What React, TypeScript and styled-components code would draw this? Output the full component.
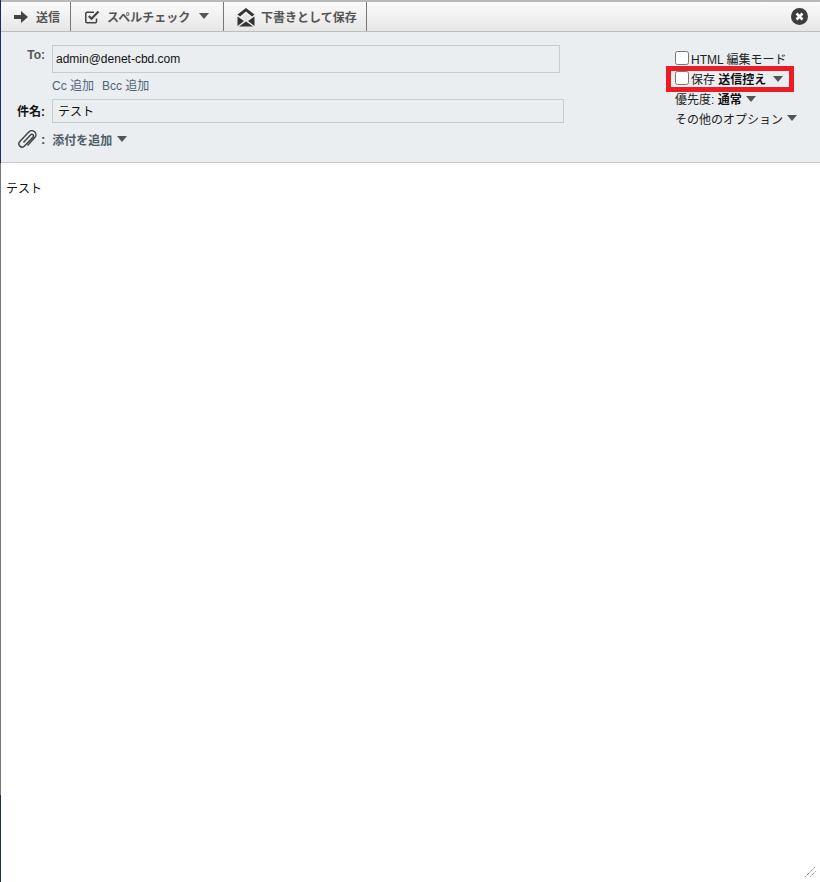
import React from 'react';
import styled, { createGlobalStyle } from 'styled-components';

const GlobalStyle = createGlobalStyle`
  html, body {
    margin: 0;
    padding: 0;
    background: #fff;
  }
  body {
    font-family: "Liberation Sans", "Noto Sans CJK JP", sans-serif;
    font-size: 12px;
    color: #333;
  }
`;

const Window = styled.div`
  width: 820px;
  height: 882px;
  display: flex;
  flex-direction: column;
  overflow: hidden;
  box-sizing: border-box;
  padding-left: 1px;
  background: linear-gradient(#1a2f5c 163px, #777 163px, #777 795px, #1a2f5c 795px);
`;

const Toolbar = styled.div`
  height: 32px;
  flex: none;
  display: flex;
  align-items: stretch;
  box-sizing: border-box;
  border-top: 2px solid #b9b9b9;
  border-bottom: 1px solid #bdbdbd;
  background: linear-gradient(#fbfbfb, #e6e6e6);
`;

const ToolButton = styled.div<{ $width: number; $pad: number }>`
  width: ${({ $width }) => $width}px;
  display: flex;
  align-items: center;
  box-sizing: border-box;
  padding-left: ${({ $pad }) => $pad}px;
  gap: 7px;
  border-right: 1px solid #777;
  font-size: 12px;
  font-weight: 700;
  color: #555;
  white-space: nowrap;
`;

const CloseSlot = styled.div`
  margin-left: auto;
  width: 29px;
  display: flex;
  align-items: center;
`;

const Arrow = styled.span`
  display: inline-block;
  width: 0;
  height: 0;
  border-left: 5.5px solid transparent;
  border-right: 5.5px solid transparent;
  border-top: 6px solid #555;
`;

const SpellArrow = styled(Arrow)`
  margin: -2px 0 0 2px;
`;

const Header = styled.div`
  height: 131px;
  flex: none;
  box-sizing: border-box;
  border-bottom: 1px solid #c9c9c9;
  background: #ebeef0;
  display: flex;
  justify-content: space-between;
`;

const Fields = styled.div`
  display: flex;
  flex-direction: column;
  padding-top: 13px;
`;

const FieldRow = styled.div`
  display: flex;
  align-items: flex-start;
`;

const FieldLabel = styled.label<{ $dark?: boolean }>`
  width: 44px;
  text-align: right;
  font-size: 12px;
  font-weight: 700;
  color: ${({ $dark }) => ($dark ? '#111' : '#555')};
  padding-top: 3px;
  margin-right: 7px;
`;

const TextBox = styled.div<{ $width: number; $height: number; $pad: number }>`
  width: ${({ $width }) => $width}px;
  height: ${({ $height }) => $height}px;
  box-sizing: border-box;
  border: 1px solid #c8cccc;
  display: flex;
  align-items: center;
  padding-left: ${({ $pad }) => $pad}px;
  color: #111;
  font-size: 12px;
`;

const SubjectBox = styled(TextBox)`
  padding-bottom: 2px;
`;

const CcRow = styled.div`
  display: flex;
  gap: 8px;
  margin: 6px 0 5px 51px;
  height: 15px;
  line-height: 15px;
  color: #4b6478;
`;

const AttachRow = styled.div`
  display: flex;
  align-items: center;
  margin: 7px 0 0 16px;
  height: 18px;
  font-weight: 700;
  color: #4f5d68;
`;

const AttachColon = styled.span`
  margin: 0 7px 0 4px;
  font-size: 13px;
  color: #444;
`;

const AttachArrow = styled(Arrow)`
  margin-left: 5px;
`;

const Options = styled.div`
  width: 145px;
  padding-top: 16px;
  flex: none;
  display: flex;
  flex-direction: column;
  color: #222;
`;

const OptionRow = styled.div`
  height: 20px;
  display: flex;
  align-items: center;
  gap: 4px;
  white-space: nowrap;
`;

const Highlight = styled(OptionRow)`
  position: relative;
  &::before {
    content: '';
    position: absolute;
    left: -9px;
    top: -2px;
    width: 128px;
    height: 26px;
    box-sizing: border-box;
    border: 5px solid #ed1c24;
  }
`;

const HighlightText = styled.span`
  margin-right: 3px;
`;

const OptionArrow = styled(Arrow)`
  margin-top: 1px;
`;

const CheckBox = styled.span`
  width: 14px;
  height: 14px;
  flex: none;
  box-sizing: border-box;
  background: #fff;
  border: 1px solid #767676;
  border-radius: 2.5px;
  margin-right: -2px;
`;

const Strong = styled.b`
  color: #111;
`;

const Body = styled.div`
  flex: 1;
  position: relative;
  background: #fff;
  padding: 19px 5px;
  color: #111;
  font-size: 12px;
  line-height: 15px;
`;

const Grip = styled.svg`
  position: absolute;
  right: 4px;
  bottom: 5px;
`;

export default function App() {
  return (
    <Window>
      <GlobalStyle />
      <Toolbar>
        <ToolButton $width={70} $pad={13}>
          <svg width="15" height="12" viewBox="0 0 15 12" fill="#444">
            <path d="M0 4h7V0l7 6-7 6V8H0z" />
          </svg>
          <span>送信</span>
        </ToolButton>
        <ToolButton $width={153} $pad={14}>
          <svg width="15" height="14" viewBox="0 0 15 14" fill="none" stroke="#444">
            <path strokeWidth="1.5" d="M11.5 8.5v3a1.2 1.2 0 0 1-1.2 1.2H2a1.2 1.2 0 0 1-1.2-1.2V3.5A1.2 1.2 0 0 1 2 2.3h7" />
            <path strokeWidth="2.2" d="M3.8 6l2.7 2.7L13.5 1.6" />
          </svg>
          <span>スペルチェック</span>
          <SpellArrow />
        </ToolButton>
        <ToolButton $width={143} $pad={13}>
          <svg width="18" height="19" viewBox="0 0 18 19" style={{ marginRight: -1, marginTop: 1 }}>
            <path d="M9 0L.5 6.5l2.5 2L9 3.5l6 5 2.5-2z" fill="#333" />
            <path d="M4.5 9.5L9 5.5l4.5 4L9 12.5z" fill="#e4e4e4" />
            <path d="M.5 8.5L7 13 .5 18zM17.5 8.5L11 13l6.5 5zM2 18.5L9 13.5l7 5z" fill="#333" />
          </svg>
          <span>下書きとして保存</span>
        </ToolButton>
        <CloseSlot>
          <svg width="17" height="17" viewBox="0 0 17 17">
            <circle cx="8.5" cy="8.5" r="8.5" fill="#3d3d3d" />
            <path d="M5.5 5.5l6 6M11.5 5.5l-6 6" stroke="#fff" strokeWidth="2.6" />
          </svg>
        </CloseSlot>
      </Toolbar>
      <Header>
        <Fields>
          <FieldRow>
            <FieldLabel>To:</FieldLabel>
            <TextBox $width={508} $height={28} $pad={3}>admin@denet-cbd.com</TextBox>
          </FieldRow>
          <CcRow>
            <span>Cc 追加</span>
            <span>Bcc 追加</span>
          </CcRow>
          <FieldRow>
            <FieldLabel $dark>件名:</FieldLabel>
            <SubjectBox $width={512} $height={24} $pad={5}>テスト</SubjectBox>
          </FieldRow>
          <AttachRow>
            <svg width="20" height="18" viewBox="0 0 20 18" fill="none" stroke="#444" strokeWidth="1.5">
              <path d="M6.5 12.5l7.2-7.7a1.6 1.6 0 0 1 2.4 2.2L7.5 16a3.2 3.2 0 0 1-4.7-4.4L11.8 2a4.1 4.1 0 0 1 6 5.6L10.5 15.5" />
            </svg>
            <AttachColon>:</AttachColon>
            <span>添付を追加</span>
            <AttachArrow />
          </AttachRow>
        </Fields>
        <Options>
          <OptionRow>
            <CheckBox />
            <span>HTML 編集モード</span>
          </OptionRow>
          <Highlight>
            <CheckBox />
            <HighlightText>保存 <Strong>送信控え</Strong></HighlightText>
            <OptionArrow />
          </Highlight>
          <OptionRow>
            <span>優先度: <Strong>通常</Strong></span>
            <OptionArrow />
          </OptionRow>
          <OptionRow>
            <span>その他のオプション</span>
            <Arrow />
          </OptionRow>
        </Options>
      </Header>
      <Body>
        テスト
        <Grip width="11" height="11" viewBox="0 0 11 11" stroke="#555" strokeDasharray="1 1">
          <path d="M0.5 10.5L10.5 0.5M5.5 10.5L10.5 5.5" />
        </Grip>
      </Body>
    </Window>
  );
}
